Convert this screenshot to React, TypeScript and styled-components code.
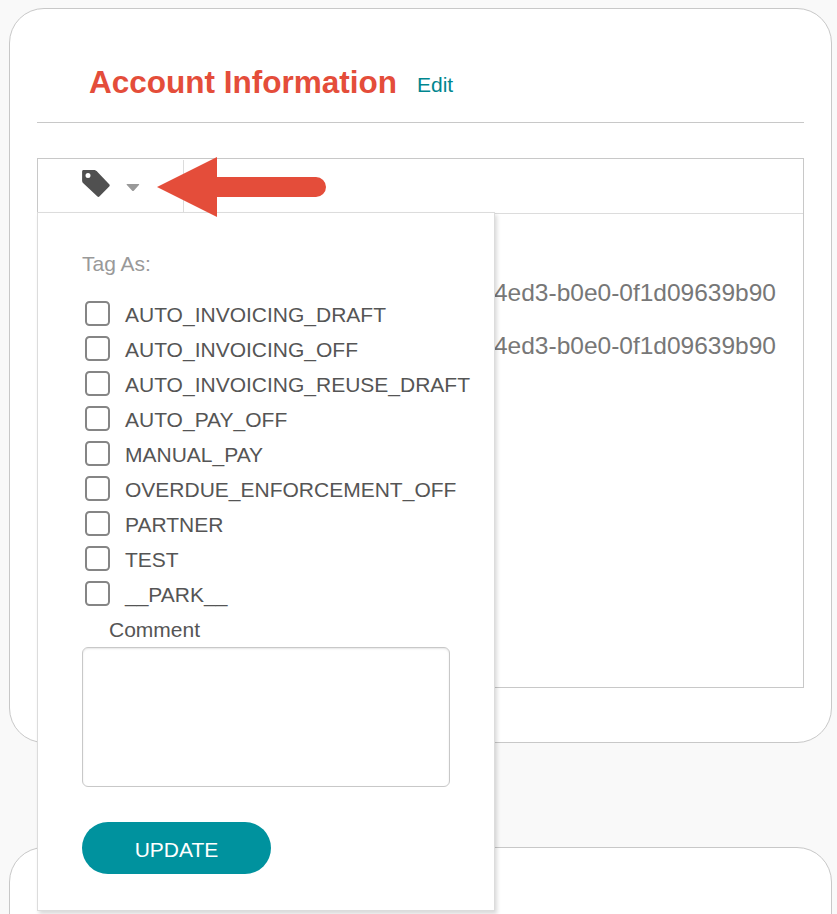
import React from "react";
import styled, { createGlobalStyle } from "styled-components";

const GlobalStyle = createGlobalStyle`
  *, *::before, *::after { box-sizing: border-box; }
  html, body { margin: 0; padding: 0; }
  body {
    background: #f9f9f9;
    font-family: "Liberation Sans", Arial, sans-serif;
    font-size: 21px;
    color: #555;
    overflow: hidden;
  }
`;

const Page = styled.main`
  display: flex;
  flex-direction: column;
  gap: 104px;
  width: 837px;
  height: 914px;
  padding: 8px 5px 0 9px;
  overflow: hidden;
`;

const Card = styled.section<{ $height: number }>`
  flex: none;
  height: ${(p) => p.$height}px;
  padding: 0 27px;
  background: #fff;
  border: 1px solid #c8c8c8;
  border-radius: 35px;
`;

const CardHeader = styled.header`
  display: flex;
  align-items: flex-start;
  height: 114px;
  padding: 55px 0 0 52px;
  border-bottom: 1px solid #c8c8c8;
`;

const Title = styled.h2`
  margin: 0;
  font-size: 31.5px;
  line-height: 36px;
  font-weight: 700;
  color: #e44d3a;
`;

const EditLink = styled.a`
  margin: 9px 0 0 20px;
  line-height: 24px;
  color: #00868f;
  text-decoration: none;
`;

const Panel = styled.div`
  height: 530px;
  margin-top: 35px;
  border: 1px solid #c8c8c8;
`;

const Toolbar = styled.div`
  position: relative;
  display: flex;
  height: 55px;
  padding-top: 1px;
  border-bottom: 1px solid #dcdcdc;
`;

const TagButton = styled.button`
  display: flex;
  align-items: flex-start;
  gap: 16px;
  width: 146px;
  height: 52px;
  padding: 10px 0 0 44px;
  border: 0;
  border-right: 1px solid #dcdcdc;
  background: none;
`;

const Caret = styled.svg`
  margin-top: 14px;
`;

const Pointer = styled.svg`
  position: absolute;
  left: 119px;
  top: -2px;
  z-index: 3;
`;

const Menu = styled.form`
  position: absolute;
  left: -1px;
  top: 53px;
  z-index: 2;
  display: flex;
  flex-direction: column;
  align-items: flex-start;
  width: 458px;
  height: 699px;
  padding: 38px 44px 0;
  background: #fff;
  border: 1px solid #dcdcdc;
  box-shadow: 2px 3px 4px rgba(0, 0, 0, 0.15);
`;

const MenuTitle = styled.div`
  line-height: 26px;
  color: #999;
`;

const TagList = styled.div`
  margin-top: 20px;
`;

const TagRow = styled.label`
  display: flex;
  align-items: center;
  height: 35px;
  padding-left: 3px;
  white-space: nowrap;
`;

const Checkbox = styled.input`
  appearance: none;
  flex: none;
  width: 25px;
  height: 25px;
  margin: 0 15px 2px 0;
  border: 2px solid #858585;
  border-radius: 4.5px;
  background: #fff;
`;

const CommentLabel = styled.label`
  margin-left: 27px;
  line-height: 35px;
`;

const CommentBox = styled.textarea`
  width: 368px;
  height: 140px;
  border: 1px solid #c8c8c8;
  border-radius: 6px;
  box-shadow: inset 0 1px 2px rgba(0, 0, 0, 0.1);
  resize: none;
`;

const UpdateButton = styled.button`
  width: 189px;
  height: 52px;
  margin-top: 35px;
  padding: 3px 0 0;
  border: 0;
  border-radius: 26px;
  background: #00929e;
  color: #fff;
  font: inherit;
`;

const Details = styled.div`
  display: flex;
  flex-direction: column;
  align-items: flex-end;
  padding: 52px 27px 0 0;
  font-size: 24.5px;
  line-height: 53px;
  color: #777;
`;

const tags = [
  "AUTO_INVOICING_DRAFT",
  "AUTO_INVOICING_OFF",
  "AUTO_INVOICING_REUSE_DRAFT",
  "AUTO_PAY_OFF",
  "MANUAL_PAY",
  "OVERDUE_ENFORCEMENT_OFF",
  "PARTNER",
  "TEST",
  "__PARK__",
];

const ids = ["4ed3-b0e0-0f1d09639b90", "4ed3-b0e0-0f1d09639b90"];

function TagIcon() {
  return (
    <svg width="28" height="28" viewBox="0 0 28 28">
      <path
        fillRule="evenodd"
        fill="#505050"
        d="M1.600 0h10.200c1.200 0 2 .4 2.800 1.100L27.200 14.200c.7.700.7 1.500 0 2.200L17.600 26.300c-.8.800-1.600.8-2.400 0L1.300 13.300C.5 12.500.1 11.700.1 10.700V1.600C.1.600.6 0 1.600 0ZM6 3a2.500 2.500 0 1 0 0 5 2.500 2.500 0 0 0 0-5Z"
      />
    </svg>
  );
}

export default function App() {
  return (
    <>
      <GlobalStyle />
      <Page>
        <Card $height={735}>
          <CardHeader>
            <Title>Account Information</Title>
            <EditLink>Edit</EditLink>
          </CardHeader>
          <Panel>
            <Toolbar>
              <TagButton type="button" aria-label="Tags">
                <TagIcon />
                <Caret width="14" height="8" viewBox="0 0 14 8">
                  <path d="M1.300 0h11.200c.7 0 .9.600.4 1.100L8 6.400c-.6.700-1.400.7-2 0L.9 1.100C.4.600.6 0 1.300 0Z" fill="#999" />
                </Caret>
              </TagButton>
              <Pointer width="170" height="62" viewBox="0 0 170 62">
                <path d="M0 30 60 0V20H159a10 10 0 0 1 0 20H60v20Z" fill="#e44d3a" />
              </Pointer>
              <Menu>
                <MenuTitle>Tag As:</MenuTitle>
                <TagList>
                  {tags.map((tag) => (
                    <TagRow key={tag}>
                      <Checkbox type="checkbox" />
                      {tag}
                    </TagRow>
                  ))}
                </TagList>
                <CommentLabel htmlFor="comment">Comment</CommentLabel>
                <CommentBox id="comment" />
                <UpdateButton type="button">UPDATE</UpdateButton>
              </Menu>
            </Toolbar>
            <Details>
              {ids.map((id, i) => (
                <span key={i}>{id}</span>
              ))}
            </Details>
          </Panel>
        </Card>
        <Card $height={300} />
      </Page>
    </>
  );
}
